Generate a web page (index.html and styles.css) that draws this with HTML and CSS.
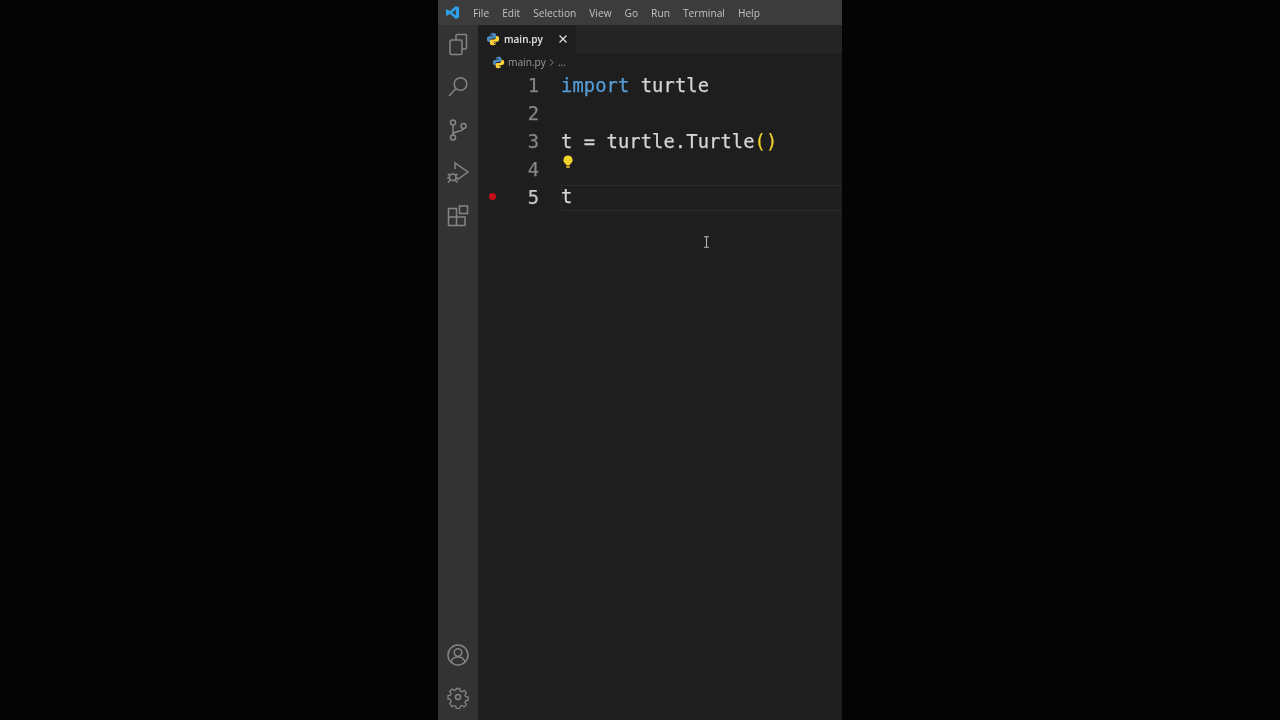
FILE: index.html
```html
<!DOCTYPE html>
<html lang="en">
<head>
<meta charset="utf-8">
<title>main.py - Visual Studio Code</title>
<link rel="stylesheet" href="styles.css">
</head>
<body>
<svg class="defs" width="0" height="0" aria-hidden="true">
  <symbol id="py" viewBox="0 0 16 16">
    <path fill="#4b8bbe" d="M7.900 1C5.200 1 5 2.100 5 3v1.400h3.100v.5H3.300C2 4.900 1 6 1 8s1 3.300 2.200 3.300h1.300V9.700c0-1.200 1-2.200 2.200-2.200h3c1 0 1.800-.8 1.800-1.800V3c0-1.200-1.300-2-3.600-2zM6.300 2.200a.65.65 0 1 1 0 1.300.65.65 0 0 1 0-1.300z"/>
    <path fill="#ffd43b" d="M8.100 15c2.700 0 2.900-1.100 2.900-2v-1.400H7.900v-.5h4.800c1.300 0 2.300-1.100 2.300-3.100s-1-3.300-2.200-3.300h-1.300v1.600c0 1.200-1 2.200-2.200 2.200h-3c-1 0-1.800.8-1.800 1.800V13c0 1.200 1.300 2 3.600 2zm1.600-1.200a.65.65 0 1 1 0-1.300.65.65 0 0 1 0 1.300z"/>
  </symbol>
</svg>
<div class="app">
  <header class="titlebar">
    <svg class="logo" viewBox="0 0 16 16" width="15" height="15"><path fill="#2f9fe8" d="M11.500 1 15 2.600v10.800L11.500 15 5.200 9.300 2.300 11.500 1 10.800V5.200l1.300-.7 2.900 2.200zM11.600 4.800 7.600 8l4 3.200z"/></svg>
    <nav class="menu">
      <span>File</span><span>Edit</span><span>Selection</span><span>View</span><span>Go</span><span>Run</span><span>Terminal</span><span>Help</span>
    </nav>
  </header>
  <div class="workbench">
    <aside class="activity">
      <div class="activity-top">
        <svg class="act" viewBox="0 0 24 24"><path d="M10 8V3.500a1 1 0 0 1 1-1h8.500a1 1 0 0 1 1 1v12.500a1 1 0 0 1-1 1H16"/><rect x="4" y="8" width="12" height="14.500" rx="1.500"/></svg>
        <svg class="act" viewBox="0 0 24 24"><circle cx="14.500" cy="9" r="6.300"/><path d="M10 13.500 3 21"/></svg>
        <svg class="act" viewBox="0 0 24 24"><circle cx="7" cy="4.500" r="2.500"/><circle cx="7" cy="19.500" r="2.500"/><circle cx="17.500" cy="8" r="2.500"/><path d="M7 7v10M17.500 10.500c0 3.500-10.500 2-10.500 6.500"/></svg>
        <svg class="act" viewBox="0 0 24 24"><path d="M9 8V2 L22 11 11 19"/><circle cx="6.700" cy="16.300" r="3.300"/><path d="M1.800 13l2 1.300M11.600 13l-2 1.300M1.300 17h2M10 17h2M2 21.500l2-2M11.400 21.500l-2-2"/></svg>
        <svg class="act" viewBox="0 0 24 24"><path d="M2.500 4.500h8v8.500h8.500v8.500H2.500zM2.500 13h8v8.500"/><path d="M13.500 2h8v7.500h-8z"/></svg>
      </div>
      <div class="activity-bottom">
        <svg class="act" viewBox="0 0 24 24"><circle cx="12" cy="12" r="10"/><circle cx="12" cy="9.500" r="3.800"/><path d="M5 19c1-4 4-5 7-5s6 1 7 5"/></svg>
        <svg class="act" viewBox="0 0 24 24"><circle cx="12" cy="12" r="2.500"/><path d="M10 2h4l.6 3 2 .9 2.700-1.700 2.600 2.800-1.700 2.500.8 2 3 .5v3.900l-3 .6-.8 2 1.700 2.500-2.800 2.700-2.500-1.700-2 .8-.6 3h-4l-.6-3-2-.8-2.500 1.700L2.300 19.400 4 16.900l-.8-2-3-.6v-3.900l3-.5.800-2L2.300 5.400l2.700-2.700 2.500 1.700 2-.9z" transform="translate(1.800 1.800) scale(.85)"/></svg>
      </div>
    </aside>
    <main class="editor">
      <div class="tabs">
        <div class="tab">
          <svg class="py" width="14" height="14"><use href="#py"/></svg>
          <span class="tab-name">main.py</span>
          <svg class="close" viewBox="0 0 10 10" width="10" height="10"><path d="M1.500 1.500l7 7M8.500 1.500l-7 7"/></svg>
        </div>
      </div>
      <div class="crumbs">
        <svg class="py" width="13" height="13"><use href="#py"/></svg>
        <span>main.py</span>
        <svg class="chev" viewBox="0 0 6 10" width="5" height="9"><path d="M1 1l4 4-4 4"/></svg>
        <span>...</span>
      </div>
      <div class="code">
        <div class="line"><span class="bp"></span><span class="num">1</span><span class="src"><span class="kw">import</span> turtle</span></div>
        <div class="line"><span class="bp"></span><span class="num">2</span><span class="src"></span></div>
        <div class="line"><span class="bp"></span><span class="num">3</span><span class="src">t = turtle.Turtle<span class="br">()</span></span></div>
        <div class="line"><span class="bp"></span><span class="num">4</span><span class="src"></span>
          <svg class="bulb" viewBox="0 0 12 14" width="12" height="14"><path fill="#f2d22c" d="M6 .5a4.500 4.500 0 0 0-2.600 8.200c.4.300.6.800.6 1.300h4c0-.5.200-1 .6-1.300A4.500 4.500 0 0 0 6 .5z"/><rect x="4.200" y="10.600" width="3.600" height="2.400" rx=".8" fill="#c9a825"/></svg>
        </div>
        <div class="line current"><span class="bp"><i class="dot"></i></span><span class="num">5</span><span class="src">t</span></div>
        <svg class="ibeam" viewBox="0 0 7 12" width="7" height="12"><path d="M1 .7h5M1 11.300h5M3.500 .7v10.600"/></svg>
      </div>
    </main>
  </div>
</div>
</body>
</html>
```
FILE: styles.css
```css
* { box-sizing: border-box; }
html, body { margin: 0; height: 100%; background: #040404; overflow: hidden; }
.defs { display: block; height: 0; }
body { display: flex; justify-content: center; }
.app {
  width: 404px;
  height: 720px;
  display: flex;
  flex-direction: column;
  background: #1e1e1e;
  font-family: "Open Sans", "Liberation Sans", sans-serif;
  filter: blur(0.6px);
}
.titlebar {
  height: 25px;
  flex: none;
  display: flex;
  align-items: center;
  background: #3c3c3c;
  padding-left: 7px;
  color: #c2c2c2;
  font-size: 10.2px;
}
.logo { flex: none; margin-right: 13px; }
.menu { display: flex; gap: 13px; }
.workbench { flex: 1; display: flex; min-height: 0; }
.activity {
  width: 40px;
  flex: none;
  background: #333333;
  display: flex;
  flex-direction: column;
  justify-content: space-between;
  align-items: center;
  padding: 7px 0 11px;
}
.activity-top { display: flex; flex-direction: column; gap: 19px; }
.activity-bottom { display: flex; flex-direction: column; gap: 18px; }
.act {
  display: block;
  width: 24px;
  height: 24px;
  fill: none;
  stroke: #858585;
  stroke-width: 1.5;
}
.editor { flex: 1; display: flex; flex-direction: column; min-width: 0; background: #1e1e1e; }
.tabs { height: 28px; flex: none; background: #252525; display: flex; }
.tab {
  width: 98px;
  display: flex;
  align-items: center;
  padding-left: 8px;
  background: #1e1e1e;
  color: #e6e6e6;
  font-size: 10px;
  font-weight: 600;
}
.py { flex: none; display: block; }
.tab-name { margin-left: 4px; }
.close { margin-left: 15px; fill: none; stroke: #dcdcdc; stroke-width: 1.3; }
.crumbs {
  height: 18px;
  flex: none;
  display: flex;
  align-items: center;
  padding-left: 14px;
  color: #9a9a9a;
  font-size: 10.2px;
}
.crumbs span:first-of-type { margin-left: 3px; }
.chev { margin: 0 4px 0 3px; fill: none; stroke: #9a9a9a; stroke-width: 1; }
.code {
  position: relative;
  flex: 1;
  font-family: "DejaVu Sans Mono", "Liberation Mono", monospace;
  font-size: 18.8px;
  -webkit-text-stroke: 0.25px currentColor;
}
.line { position: relative; height: 28px; display: flex; align-items: center; color: #d4d4d4; }
.bp { width: 28px; flex: none; display: flex; justify-content: center; align-items: center; }
.dot { display: block; width: 7px; height: 7px; border-radius: 50%; background: #c5101a; margin-top: -2px; }
.num { width: 33px; flex: none; text-align: right; color: #858585; }
.current .num { color: #c6c6c6; }
.src { margin-left: 22px; white-space: pre; letter-spacing: 0.08px; }
.current .src {
  flex: 1;
  height: 26px;
  margin-top: 2px;
  line-height: 24px;
  box-shadow: inset 1px 1px 0 #2a2a2a, inset 0 -1px 0 #2a2a2a;
}
.kw { color: #569cd6; }
.br { color: #f0cf2e; }
.bulb { position: absolute; left: 84px; top: 0; }
.ibeam { position: absolute; left: 225px; top: 165px; fill: none; stroke: #b5b5b5; stroke-width: 1.1; }
```
